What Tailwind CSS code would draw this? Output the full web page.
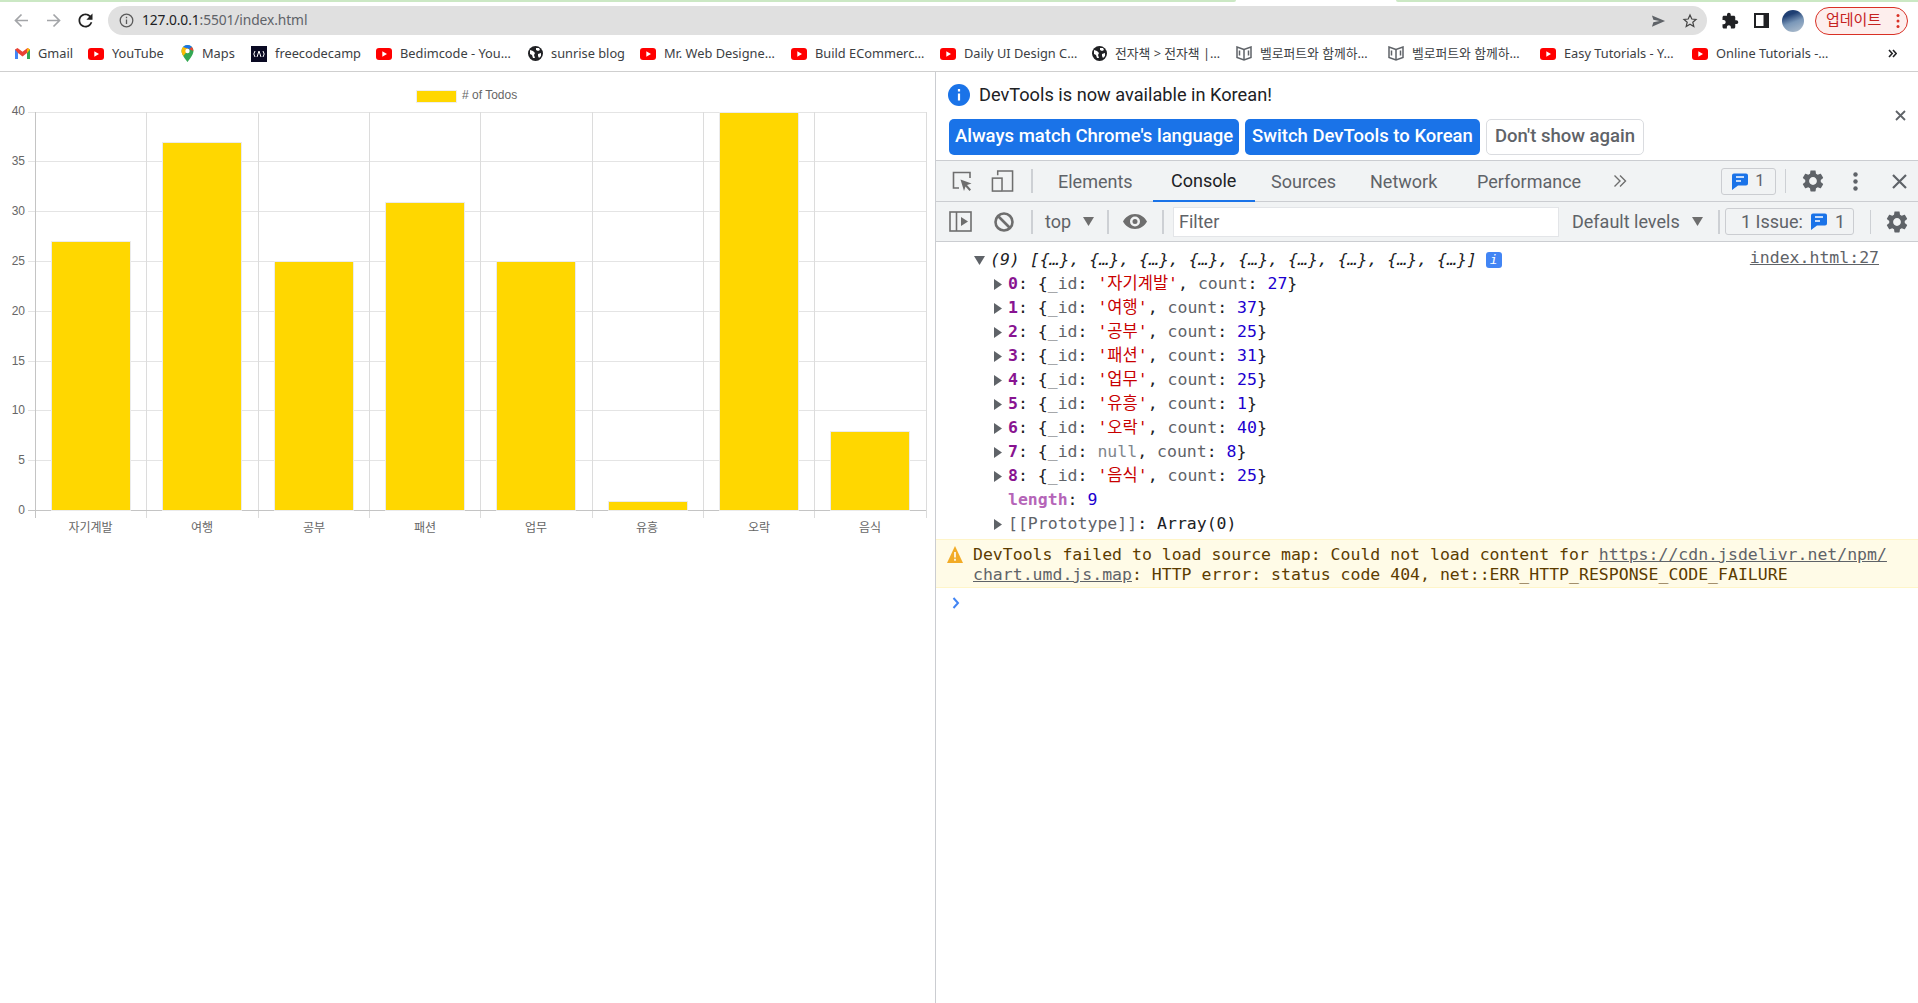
<!DOCTYPE html>
<html lang="ko">
<head>
  <meta charset="UTF-8" />
  <title>index.html</title>
  <script src="https://cdn.jsdelivr.net/npm/@tailwindcss/browser@4"></script>
</head>
<body class="bg-white overflow-hidden [font-family:Roboto,'Noto_Sans_CJK_KR',sans-serif]">
<div class="w-[1918px] h-[1003px] flex flex-col">

  <!-- progress strip -->
  <div class="h-[2px] flex justify-between shrink-0">
    <div class="w-[1236px] bg-[#cbe8c4] rounded-br-sm"></div>
    <div class="w-[522px] bg-[#cbe8c4] rounded-bl-sm"></div>
  </div>

  <!-- toolbar -->
  <div class="h-[37px] flex items-center shrink-0 relative">
    <div class="w-[108px] flex items-center shrink-0">
      <svg class="ml-[13px]" width="17" height="17" viewBox="0 0 17 17" fill="none" stroke="#a3a5a8" stroke-width="1.7"><path d="M15 8.500H3M8.500 2.500l-6 6 6 6"/></svg>
      <svg class="ml-[15px]" width="17" height="17" viewBox="0 0 17 17" fill="none" stroke="#a3a5a8" stroke-width="1.7"><path d="M2 8.500h12M8.500 2.500l6 6-6 6"/></svg>
      <svg class="ml-[13px]" width="21" height="21" viewBox="0 0 24 24" fill="#222"><path d="M17.65 6.350C16.200 4.900 14.210 4 12 4c-4.420 0-7.990 3.580-7.990 8s3.570 8 7.990 8c3.730 0 6.840-2.550 7.730-6h-2.080c-.82 2.330-3.040 4-5.650 4-3.310 0-6-2.690-6-6s2.690-6 6-6c1.660 0 3.140.69 4.220 1.780L13 11h7V4l-2.350 2.350z"/></svg>
    </div>
    <div class="w-[1599px] h-[29px] bg-[#e0e0e0] rounded-full flex items-center pl-[11px] shrink-0">
      <svg width="15" height="15" viewBox="0 0 15 15" fill="none" stroke="#5a5a5a" stroke-width="1.3"><circle cx="7.500" cy="7.500" r="6.300"/><path d="M7.500 6.500v4.500M7.500 3.700v1.600"/></svg>
      <span class="ml-[8px] text-[13.8px] tracking-[-0.1px] text-[#202124] [font-family:'Noto_Sans',sans-serif]">127.0.0.1<span class="text-[#5f6368]">:5501/index.html</span></span>
      <svg class="ml-auto mr-[16px]" width="15" height="14" viewBox="0 0 16 14" fill="#5f6368"><path d="M1 1l14 6-14 6 1.500-4.600L9 7 2.500 5.600z"/></svg>
      <svg class="mr-[9px]" width="16" height="16" viewBox="0 0 16 16" fill="none" stroke="#444" stroke-width="1.2"><path d="M8 2l1.800 4 4.200.4-3.200 2.800 1 4.300L8 11.200l-3.800 2.300 1-4.300L2 6.400 6.200 6z"/></svg>
    </div>
    <svg class="ml-[14px]" width="18" height="18" viewBox="0 0 24 24" fill="#202124"><path d="M20.500 11H19V7c0-1.100-.9-2-2-2h-4V3.500C13 2.120 11.880 1 10.500 1S8 2.120 8 3.500V5H4c-1.100 0-1.990.9-1.990 2v3.800H3.500c1.490 0 2.700 1.210 2.700 2.700s-1.210 2.700-2.700 2.700H2V20c0 1.100.9 2 2 2h3.800v-1.500c0-1.490 1.210-2.700 2.700-2.700 1.490 0 2.700 1.210 2.700 2.700V22H17c1.100 0 2-.9 2-2v-4h1.500c1.380 0 2.500-1.120 2.500-2.500S21.880 11 20.500 11z"/></svg>
    <svg class="ml-[15px]" width="15" height="15" viewBox="0 0 15 15"><path d="M1 1h13v13H1z" fill="#fff" stroke="#202124" stroke-width="2"/><path d="M9.500 1H14v13H9.500z" fill="#202124"/></svg>
    <div class="ml-[13px] w-[22px] h-[22px] rounded-full bg-[linear-gradient(160deg,#1f3f73_25%,#7a97b8_55%,#b4c2d0)]"></div>
    <div class="ml-[11px] w-[93px] h-[28px] rounded-full border border-[#d93025] bg-[#fdeeed] flex items-center text-[#c5221f] text-[15px] pl-[10px]">
      <span>업데이트</span>
      <svg class="ml-auto mr-[7px]" width="4" height="16" viewBox="0 0 4 16" fill="#d93025"><circle cx="2" cy="2.500" r="1.500"/><circle cx="2" cy="8" r="1.500"/><circle cx="2" cy="13.500" r="1.500"/></svg>
    </div>
  </div>

  <!-- bookmarks -->
  <div class="h-[33px] pb-[3px] border-b border-[#cfcfcf] flex items-center pl-[15px] text-[12.8px] text-[#3c4043] shrink-0 [font-family:'Noto_Sans','Noto_Sans_CJK_KR',sans-serif]">
    <div class="w-[73px] flex items-center gap-[8px]">
      <svg width="15" height="12" viewBox="0 0 15 12"><path d="M0 1.500V11h3V5l4.500 3.400L12 5v6h3V1.500L12.500 0 7.500 3.800 2.500 0z" fill="#ea4335"/><path d="M0 1.500V11h3V5z" fill="#4285f4"/><path d="M12 5v6h3V1.500z" fill="#34a853"/><path d="M12.500 0L15 1.500 12 5V2z" fill="#fbbc04"/></svg>
      <span>Gmail</span>
    </div>
    <div class="w-[93px] flex items-center gap-[8px]">
      <svg width="16" height="12" viewBox="0 0 16 12"><rect width="16" height="12" rx="3" fill="#f00"/><path d="M6.300 3.300v5.400L11 6z" fill="#fff"/></svg>
      <span>YouTube</span>
    </div>
    <div class="w-[70px] flex items-center gap-[8px]">
      <svg width="13" height="17" viewBox="0 0 13 17"><path d="M6.500 0A6 6 0 0 0 .5 6c0 4 6 11 6 11s6-7 6-11a6 6 0 0 0-6-6z" fill="#34a853"/><path d="M6.500 0A6 6 0 0 0 2 2l4.500 4 4.500-4A6 6 0 0 0 6.500 0z" fill="#1a73e8"/><path d="M.5 6c0 1.500.8 3.300 1.800 5L8 4 2 2A6 6 0 0 0 .5 6z" fill="#fbbc04"/><path d="M11 2L8 4l4.300 2A6 6 0 0 0 11 2z" fill="#ea4335"/><circle cx="6.500" cy="6" r="2.200" fill="#fff"/></svg>
      <span>Maps</span>
    </div>
    <div class="w-[125px] flex items-center gap-[8px]">
      <svg width="16" height="16" viewBox="0 0 16 16"><rect width="16" height="16" fill="#0a0a23"/><path d="M4 5L2.800 8 4 11M12 5l1.200 3L12 11" stroke="#fff" fill="none"/><path d="M8 5L6 11M8 5l2 6" stroke="#fff" fill="none"/></svg>
      <span>freecodecamp</span>
    </div>
    <div class="w-[152px] flex items-center gap-[8px]">
      <svg width="16" height="12" viewBox="0 0 16 12"><rect width="16" height="12" rx="3" fill="#f00"/><path d="M6.300 3.300v5.400L11 6z" fill="#fff"/></svg>
      <span>Bedimcode - You…</span>
    </div>
    <div class="w-[112px] flex items-center gap-[8px]">
      <svg width="15" height="15" viewBox="0 0 15 15"><circle cx="7.500" cy="7.500" r="7.500" fill="#202124"/><path d="M2 4l3 1 2 2-1 2 1 3-2 0-1-3-2-1zM8 2l3 0 1 2-2 1-2-1zM10 8l3-1 0 3-2 2-1-2z" fill="#fff"/></svg>
      <span>sunrise blog</span>
    </div>
    <div class="w-[151px] flex items-center gap-[8px]">
      <svg width="16" height="12" viewBox="0 0 16 12"><rect width="16" height="12" rx="3" fill="#f00"/><path d="M6.300 3.300v5.400L11 6z" fill="#fff"/></svg>
      <span>Mr. Web Designe…</span>
    </div>
    <div class="w-[149px] flex items-center gap-[8px]">
      <svg width="16" height="12" viewBox="0 0 16 12"><rect width="16" height="12" rx="3" fill="#f00"/><path d="M6.300 3.300v5.400L11 6z" fill="#fff"/></svg>
      <span>Build ECommerc…</span>
    </div>
    <div class="w-[152px] flex items-center gap-[8px]">
      <svg width="16" height="12" viewBox="0 0 16 12"><rect width="16" height="12" rx="3" fill="#f00"/><path d="M6.300 3.300v5.400L11 6z" fill="#fff"/></svg>
      <span>Daily UI Design C…</span>
    </div>
    <div class="w-[144px] flex items-center gap-[8px]">
      <svg width="15" height="15" viewBox="0 0 15 15"><circle cx="7.500" cy="7.500" r="7.500" fill="#202124"/><path d="M2 4l3 1 2 2-1 2 1 3-2 0-1-3-2-1zM8 2l3 0 1 2-2 1-2-1zM10 8l3-1 0 3-2 2-1-2z" fill="#fff"/></svg>
      <span>전자책 &gt; 전자책 |…</span>
    </div>
    <div class="w-[152px] flex items-center gap-[8px]">
      <svg width="16" height="15" viewBox="0 0 16 15" fill="none" stroke="#5f6368" stroke-width="1.500"><path d="M8 3.500L1 1v10.500l7 2.500 7-2.500V1z"/><path d="M8 3.500V14M3.500 4.500v5M12.500 4.500v5"/></svg>
      <span>벨로퍼트와 함께하…</span>
    </div>
    <div class="w-[152px] flex items-center gap-[8px]">
      <svg width="16" height="15" viewBox="0 0 16 15" fill="none" stroke="#5f6368" stroke-width="1.500"><path d="M8 3.500L1 1v10.500l7 2.500 7-2.500V1z"/><path d="M8 3.500V14M3.500 4.500v5M12.500 4.500v5"/></svg>
      <span>벨로퍼트와 함께하…</span>
    </div>
    <div class="w-[152px] flex items-center gap-[8px]">
      <svg width="16" height="12" viewBox="0 0 16 12"><rect width="16" height="12" rx="3" fill="#f00"/><path d="M6.300 3.300v5.400L11 6z" fill="#fff"/></svg>
      <span>Easy Tutorials - Y…</span>
    </div>
    <div class="w-[200px] flex items-center gap-[8px]">
      <svg width="16" height="12" viewBox="0 0 16 12"><rect width="16" height="12" rx="3" fill="#f00"/><path d="M6.300 3.300v5.400L11 6z" fill="#fff"/></svg>
      <span>Online Tutorials -…</span>
    </div>
    <svg class="ml-[-4px]" width="9" height="9" viewBox="0 0 9 9" fill="none" stroke="#202124" stroke-width="1.600"><path d="M1 1l3.200 3.500L1 8M5 1l3.200 3.500L5 8"/></svg>
  </div>

  <div class="flex flex-1 min-h-0">
    <!-- page: bar chart -->
    <div class="w-[935px] shrink-0">
      <svg width="935" height="480" viewBox="0 72 935 480" class="[font-family:'Liberation_Sans','Noto_Sans_CJK_KR',sans-serif]" font-size="12" fill="#666">
        <rect x="416.500" y="90.500" width="40" height="12" fill="#ffd700" stroke="#eee"/>
        <text x="462" y="98.500">&#35; of Todos</text>

        <g stroke="#e4e4e4">
          <path d="M28 112.500H926M28 161.500H926M28 211.500H926M28 261.500H926M28 311.500H926M28 361.500H926M28 410.500H926M28 460.500H926"/>
        </g>
        <g stroke="#dcdcdc">
          <path d="M146.500 112V518M258.500 112V518M369.500 112V518M480.500 112V518M592.500 112V518M703.500 112V518M814.500 112V518M926.500 112V518"/>
        </g>
        <g stroke="#c4c4c4">
          <path d="M35.500 112V518M28 510.500H926"/>
        </g>

        <g fill="#ffd700" stroke="#ebebeb">
          <rect x="51.500" y="241.500" width="79" height="269"/>
          <rect x="162.500" y="142.500" width="79" height="368"/>
          <rect x="274.500" y="261.500" width="79" height="249"/>
          <rect x="385.500" y="202.500" width="79" height="308"/>
          <rect x="496.500" y="261.500" width="79" height="249"/>
          <rect x="608.500" y="501.500" width="79" height="9"/>
          <rect x="719.500" y="112.500" width="79" height="398"/>
          <rect x="830.500" y="431.500" width="79" height="79"/>
        </g>

        <g text-anchor="end">
          <text x="25" y="115">40</text><text x="25" y="165">35</text><text x="25" y="215">30</text><text x="25" y="265">25</text>
          <text x="25" y="315">20</text><text x="25" y="365">15</text><text x="25" y="414">10</text><text x="25" y="464">5</text><text x="25" y="514">0</text>
        </g>
        <g text-anchor="middle">
          <text x="90.500" y="531.500">자기계발</text><text x="202" y="531.500">여행</text><text x="314" y="531.500">공부</text><text x="425" y="531.500">패션</text>
          <text x="536" y="531.500">업무</text><text x="647" y="531.500">유흥</text><text x="759" y="531.500">오락</text><text x="870" y="531.500">음식</text>
        </g>
      </svg>
    </div>

    <!-- devtools -->
    <div class="flex-1 border-l border-[#cbcdd1] flex flex-col min-w-0">
      <!-- language infobar -->
      <div class="h-[88px] pl-[12px] relative shrink-0">
        <div class="h-[45px] mb-[2px] flex items-center">
          <svg width="22" height="22" viewBox="0 0 22 22"><circle cx="11" cy="11" r="11" fill="#1a73e8"/><path d="M11 9.500v7M11 5v2.500" stroke="#fff" stroke-width="2.200"/></svg>
          <span class="ml-[9px] text-[18.2px] text-[#202124]">DevTools is now available in Korean!</span>
        </div>
        <div class="flex gap-[6px] ml-[1px] text-[18.5px] font-medium">
          <button class="w-[290px] h-[36px] bg-[#1a73e8] rounded-[5px] text-white">Always match Chrome's language</button>
          <button class="w-[235px] h-[36px] bg-[#1a73e8] rounded-[5px] text-white">Switch DevTools to Korean</button>
          <button class="w-[158px] h-[36px] border border-[#dadce0] rounded-[5px] text-[#5f6368] bg-white">Don't show again</button>
        </div>
        <svg class="absolute right-[12px] top-[38px]" width="11" height="11" viewBox="0 0 11 11" stroke="#5f6368" stroke-width="1.800"><path d="M1 1l9 9M10 1l-9 9"/></svg>
      </div>

      <!-- tab strip -->
      <div class="h-[42px] border-y border-[#cbcdd1] bg-[#f1f3f4] flex items-center text-[18px] text-[#5f6368] shrink-0 relative">
        <svg class="ml-[15px]" width="22" height="22" viewBox="0 0 22 22" fill="none" stroke="#6e6e6e" stroke-width="1.600"><path d="M8 18H2.500V2.500H19V8"/><path d="M9.500 9.500l11 4-4.500 1.500 4 4.500-1.500 1.500-4-4.500-1.500 4.500z" fill="#6e6e6e" stroke="none"/></svg>
        <svg class="ml-[18px]" width="23" height="24" viewBox="0 0 24 24" fill="none" stroke="#6e6e6e" stroke-width="1.600"><path d="M7 6V1.500h15.500v21H12"/><rect x="1.500" y="9" width="10" height="13.500"/></svg>
        <div class="ml-[17px] w-[2px] h-[24px] bg-[#cdd0d4]"></div>
        <div class="w-[120px] pl-[25px]">Elements</div>
        <div class="w-[102px] pl-[18px] h-[41px] flex items-center border-b-[2px] border-[#1a73e8] text-[#202124]">Console</div>
        <div class="w-[115px] pl-[16px]">Sources</div>
        <div class="w-[107px]">Network</div>
        <div class="w-[136px]">Performance</div>
        <svg width="14" height="14" viewBox="0 0 14 14" fill="none" stroke="#6e6e6e" stroke-width="1.400"><path d="M1.500 1.500L7 7l-5.500 5.500M7 1.500L12.500 7 7 12.500"/></svg>
        <div class="ml-[94px] w-[55px] h-[27px] border border-[#cbcdd1] rounded-[3px] flex items-center justify-center gap-[7px]">
          <svg width="16" height="17" viewBox="0 0 16 17"><path d="M2 .5h12a2 2 0 0 1 2 2v8a2 2 0 0 1-2 2H6l-6 4.500V2.500a2 2 0 0 1 2-2z" fill="#1a73e8"/><path d="M4 4h8M4 8h5" stroke="#fff" stroke-width="1.500"/></svg>
          <span class="text-[16.500px] leading-none">1</span>
        </div>
        <div class="ml-[9px] w-[1px] h-[24px] bg-[#cdd0d4]"></div>
        <svg class="ml-[14px]" width="26" height="26" viewBox="0 0 24 24" fill="#5f6368"><path d="M19.140 12.940c.04-.3.06-.61.06-.94 0-.32-.02-.64-.07-.94l2.030-1.580c.18-.14.23-.41.12-.61l-1.920-3.320c-.12-.22-.37-.29-.59-.22l-2.390.96c-.5-.38-1.030-.7-1.620-.94l-.36-2.540c-.04-.24-.24-.41-.48-.41h-3.840c-.24 0-.43.17-.47.41l-.36 2.540c-.59.24-1.130.57-1.620.94l-2.390-.96c-.22-.08-.47 0-.59.22L2.740 8.870c-.12.21-.08.47.12.61l2.030 1.580c-.05.3-.09.63-.09.94s.02.64.07.94l-2.030 1.580c-.18.14-.23.41-.12.61l1.920 3.320c.12.22.37.29.59.22l2.390-.96c.5.38 1.030.7 1.620.94l.36 2.540c.05.24.24.41.48.41h3.840c.24 0 .44-.17.47-.41l.36-2.540c.59-.24 1.130-.56 1.620-.94l2.390.96c.22.08.47 0 .59-.22l1.920-3.320c.12-.22.07-.47-.12-.61l-2.010-1.580zM12 15.600c-1.980 0-3.600-1.620-3.600-3.600s1.620-3.600 3.600-3.600 3.600 1.620 3.600 3.600-1.620 3.600-3.600 3.600z"/></svg>
        <svg class="ml-[27px]" width="5" height="19" viewBox="0 0 5 19" fill="#5f6368"><circle cx="2.500" cy="2.500" r="2.200"/><circle cx="2.500" cy="9.500" r="2.200"/><circle cx="2.500" cy="16.500" r="2.200"/></svg>
        <svg class="ml-[34px]" width="15" height="15" viewBox="0 0 15 15" stroke="#5f6368" stroke-width="2.200"><path d="M1 1l13 13M14 1L1 14"/></svg>
      </div>

      <!-- console toolbar -->
      <div class="h-[40px] border-b border-[#cbcdd1] bg-[#f1f3f4] flex items-center text-[18px] text-[#5f6368] shrink-0">
        <svg class="ml-[13px]" width="23" height="21" viewBox="0 0 23 21" fill="none" stroke="#6e6e6e" stroke-width="1.600"><rect x="1" y="1" width="21" height="19"/><path d="M7.500 1v19"/><path d="M12 6l7 4.500-7 4.500z" fill="#6e6e6e" stroke="none"/></svg>
        <svg class="ml-[22px]" width="20" height="20" viewBox="0 0 20 20" fill="none" stroke="#6e6e6e" stroke-width="2.600"><circle cx="10" cy="10" r="8.500"/><path d="M4 4l12 12"/></svg>
        <div class="ml-[17px] w-[2px] h-[24px] bg-[#cdd0d4]"></div>
        <div class="ml-[12px] w-[38px]">top</div>
        <svg width="11" height="9" viewBox="0 0 11 9" fill="#6e6e6e"><path d="M0 0h11L5.500 9z"/></svg>
        <div class="ml-[13px] w-[2px] h-[24px] bg-[#cdd0d4]"></div>
        <svg class="ml-[14px]" width="24" height="15" viewBox="0 0 24 15"><path fill="#6e6e6e" fill-rule="evenodd" d="M12 0c5.500 0 9.700 3.300 12 7.500C21.700 11.700 17.500 15 12 15S2.300 11.700 0 7.500C2.300 3.300 6.500 0 12 0zm0 2.500a5 5 0 1 0 0 10 5 5 0 0 0 0-10zm0 2.500a2.500 2.500 0 1 1 0 5 2.500 2.500 0 0 1 0-5z"/></svg>
        <div class="ml-[15px] w-[2px] h-[24px] bg-[#cdd0d4]"></div>
        <div class="ml-[9px] w-[386px] h-[30px] bg-white border border-[#e3e5e8] flex items-center pl-[5px]">Filter</div>
        <div class="ml-[13px] w-[120px]">Default levels</div>
        <svg width="11" height="9" viewBox="0 0 11 9" fill="#6e6e6e"><path d="M0 0h11L5.500 9z"/></svg>
        <div class="ml-[15px] w-[2px] h-[24px] bg-[#cdd0d4]"></div>
        <div class="ml-[5px] w-[129px] h-[27px] border border-[#cbcdd1] rounded-[3px] flex items-center pl-[15px]">
          <span class="w-[70px]">1 Issue:</span>
          <svg width="16" height="17" viewBox="0 0 16 17"><path d="M2 .5h12a2 2 0 0 1 2 2v8a2 2 0 0 1-2 2H6l-6 4.500V2.500a2 2 0 0 1 2-2z" fill="#1a73e8"/><path d="M4 4h8M4 8h5" stroke="#fff" stroke-width="1.500"/></svg>
          <span class="ml-[8px]">1</span>
        </div>
        <div class="ml-[16px] w-[1px] h-[24px] bg-[#cdd0d4]"></div>
        <svg class="ml-[13px]" width="26" height="26" viewBox="0 0 24 24" fill="#5f6368"><path d="M19.140 12.940c.04-.3.06-.61.06-.94 0-.32-.02-.64-.07-.94l2.030-1.580c.18-.14.23-.41.12-.61l-1.920-3.320c-.12-.22-.37-.29-.59-.22l-2.390.96c-.5-.38-1.030-.7-1.620-.94l-.36-2.540c-.04-.24-.24-.41-.48-.41h-3.840c-.24 0-.43.17-.47.41l-.36 2.540c-.59.24-1.130.57-1.620.94l-2.390-.96c-.22-.08-.47 0-.59.22L2.740 8.870c-.12.21-.08.47.12.61l2.030 1.580c-.05.3-.09.63-.09.94s.02.64.07.94l-2.030 1.580c-.18.14-.23.41-.12.61l1.920 3.320c.12.22.37.29.59.22l2.390-.96c.5.38 1.030.7 1.620.94l.36 2.540c.05.24.24.41.48.41h3.840c.24 0 .44-.17.47-.41l.36-2.540c.59-.24 1.130-.56 1.620-.94l2.390.96c.22.08.47 0 .59-.22l1.920-3.320c.12-.22.07-.47-.12-.61l-2.010-1.580zM12 15.600c-1.980 0-3.600-1.620-3.600-3.600s1.620-3.600 3.600-3.600 3.600 1.620 3.600 3.600-1.620 3.600-3.600 3.600z"/></svg>
      </div>

      <!-- console output -->
      <div class="pt-[6px] text-[16.500px] text-[#202124] [font-family:'DejaVu_Sans_Mono','Noto_Sans_CJK_KR',monospace]">
        <div class="h-6 flex items-center pl-[38px]">
          <svg width="11" height="9" viewBox="0 0 11 9" fill="#5f6368"><path d="M0 0h11L5.500 9z"/></svg>
          <span class="ml-[5px] italic">(9) [{…}, {…}, {…}, {…}, {…}, {…}, {…}, {…}, {…}]</span>
          <span class="ml-[9px] w-[16px] h-[16px] bg-[#4285f4] rounded-[3px] text-white text-[13px] italic flex items-center justify-center">i</span>
          <span class="ml-auto mr-[39px] -mt-[4px] text-[#5f6368] underline">index.html:27</span>
        </div>
        <div class="h-6 flex items-center pl-[58px]"><svg class="mr-[6px]" width="8" height="11" viewBox="0 0 8 11" fill="#5f6368"><path d="M0 0l8 5.500L0 11z"/></svg><span class="font-bold text-[#881391]">0</span><span>: {<span class="text-[#5f6368]">_id</span>: <span class="text-[#c80000]">'자기계발'</span>, <span class="text-[#5f6368]">count</span>: <span class="text-[#1c00cf]">27</span>}</span></div>
        <div class="h-6 flex items-center pl-[58px]"><svg class="mr-[6px]" width="8" height="11" viewBox="0 0 8 11" fill="#5f6368"><path d="M0 0l8 5.500L0 11z"/></svg><span class="font-bold text-[#881391]">1</span><span>: {<span class="text-[#5f6368]">_id</span>: <span class="text-[#c80000]">'여행'</span>, <span class="text-[#5f6368]">count</span>: <span class="text-[#1c00cf]">37</span>}</span></div>
        <div class="h-6 flex items-center pl-[58px]"><svg class="mr-[6px]" width="8" height="11" viewBox="0 0 8 11" fill="#5f6368"><path d="M0 0l8 5.500L0 11z"/></svg><span class="font-bold text-[#881391]">2</span><span>: {<span class="text-[#5f6368]">_id</span>: <span class="text-[#c80000]">'공부'</span>, <span class="text-[#5f6368]">count</span>: <span class="text-[#1c00cf]">25</span>}</span></div>
        <div class="h-6 flex items-center pl-[58px]"><svg class="mr-[6px]" width="8" height="11" viewBox="0 0 8 11" fill="#5f6368"><path d="M0 0l8 5.500L0 11z"/></svg><span class="font-bold text-[#881391]">3</span><span>: {<span class="text-[#5f6368]">_id</span>: <span class="text-[#c80000]">'패션'</span>, <span class="text-[#5f6368]">count</span>: <span class="text-[#1c00cf]">31</span>}</span></div>
        <div class="h-6 flex items-center pl-[58px]"><svg class="mr-[6px]" width="8" height="11" viewBox="0 0 8 11" fill="#5f6368"><path d="M0 0l8 5.500L0 11z"/></svg><span class="font-bold text-[#881391]">4</span><span>: {<span class="text-[#5f6368]">_id</span>: <span class="text-[#c80000]">'업무'</span>, <span class="text-[#5f6368]">count</span>: <span class="text-[#1c00cf]">25</span>}</span></div>
        <div class="h-6 flex items-center pl-[58px]"><svg class="mr-[6px]" width="8" height="11" viewBox="0 0 8 11" fill="#5f6368"><path d="M0 0l8 5.500L0 11z"/></svg><span class="font-bold text-[#881391]">5</span><span>: {<span class="text-[#5f6368]">_id</span>: <span class="text-[#c80000]">'유흥'</span>, <span class="text-[#5f6368]">count</span>: <span class="text-[#1c00cf]">1</span>}</span></div>
        <div class="h-6 flex items-center pl-[58px]"><svg class="mr-[6px]" width="8" height="11" viewBox="0 0 8 11" fill="#5f6368"><path d="M0 0l8 5.500L0 11z"/></svg><span class="font-bold text-[#881391]">6</span><span>: {<span class="text-[#5f6368]">_id</span>: <span class="text-[#c80000]">'오락'</span>, <span class="text-[#5f6368]">count</span>: <span class="text-[#1c00cf]">40</span>}</span></div>
        <div class="h-6 flex items-center pl-[58px]"><svg class="mr-[6px]" width="8" height="11" viewBox="0 0 8 11" fill="#5f6368"><path d="M0 0l8 5.500L0 11z"/></svg><span class="font-bold text-[#881391]">7</span><span>: {<span class="text-[#5f6368]">_id</span>: <span class="text-[#80868b]">null</span>, <span class="text-[#5f6368]">count</span>: <span class="text-[#1c00cf]">8</span>}</span></div>
        <div class="h-6 flex items-center pl-[58px]"><svg class="mr-[6px]" width="8" height="11" viewBox="0 0 8 11" fill="#5f6368"><path d="M0 0l8 5.500L0 11z"/></svg><span class="font-bold text-[#881391]">8</span><span>: {<span class="text-[#5f6368]">_id</span>: <span class="text-[#c80000]">'음식'</span>, <span class="text-[#5f6368]">count</span>: <span class="text-[#1c00cf]">25</span>}</span></div>
        <div class="h-6 flex items-center pl-[72px]"><span class="font-bold text-[#b565b8]">length</span><span>: <span class="text-[#1c00cf]">9</span></span></div>
        <div class="h-6 flex items-center pl-[58px]"><svg class="mr-[6px]" width="8" height="11" viewBox="0 0 8 11" fill="#5f6368"><path d="M0 0l8 5.500L0 11z"/></svg><span><span class="text-[#5f6368]">[[Prototype]]</span>: Array(0)</span></div>

        <div class="mt-[3px] h-[49px] bg-[#fffbe7] border-y border-[#fff5c8] flex text-[#5c3c00] pl-[11px] leading-[20px]">
          <svg class="mt-[6px] shrink-0" width="16" height="17" viewBox="0 0 16 17"><path d="M8 0l8 17H0z" fill="#f2ab26"/><path d="M8 6v5.500M8 12.700v2" stroke="#fff" stroke-width="1.600"/></svg>
          <div class="ml-[10px] pt-[5px] whitespace-pre">DevTools failed to load source map: Could not load content for <span class="text-[#5f6368] underline">https://cdn.jsdelivr.net/npm/</span>
<span class="text-[#5f6368] underline">chart.umd.js.map</span>: HTTP error: status code 404, net::ERR_HTTP_RESPONSE_CODE_FAILURE</div>
        </div>
        <div class="h-[30px] flex items-center pl-[16px]">
          <svg width="8" height="12" viewBox="0 0 8 12" fill="none" stroke="#4285f4" stroke-width="2"><path d="M1.500 1L6 6l-4.500 5"/></svg>
        </div>
      </div>
    </div>
  </div>
</div>
</body>
</html>
